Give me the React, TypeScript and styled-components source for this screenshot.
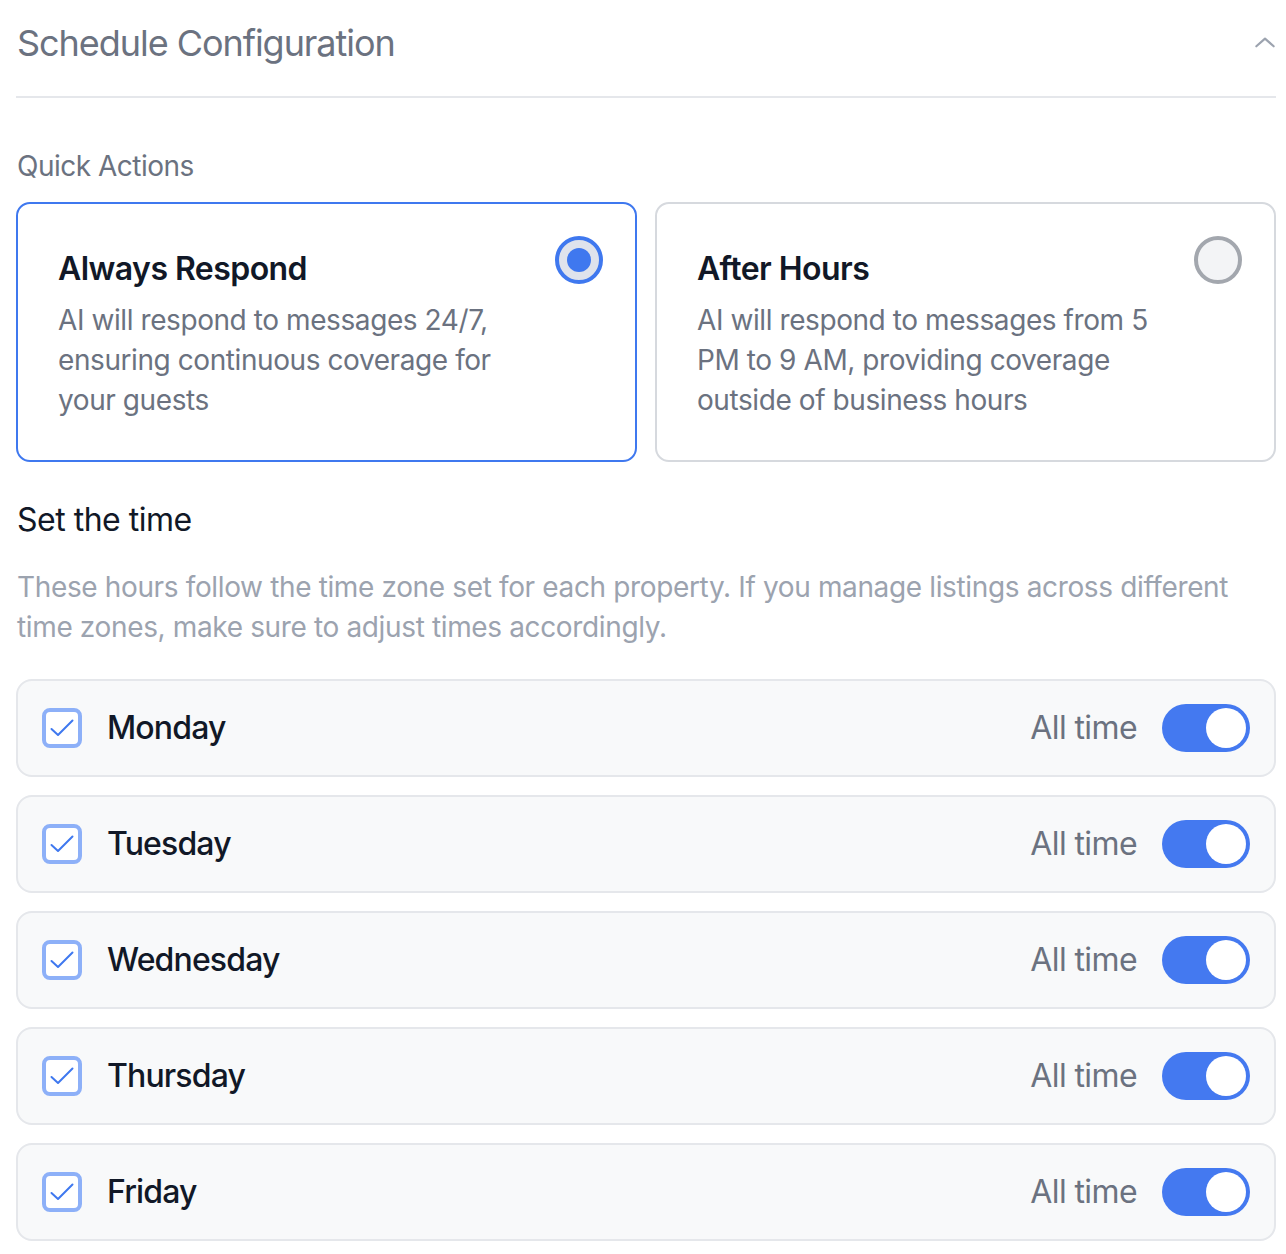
import React, { useState } from "react";
import styled, { createGlobalStyle } from "styled-components";

const Global = createGlobalStyle`
  html, body { margin: 0; padding: 0; background: #ffffff; }
  body { font-family: Inter, "Noto Sans", "Liberation Sans", sans-serif; -webkit-font-smoothing: antialiased; }
  * { box-sizing: border-box; }
`;

const Page = styled.div`
  padding: 0 10px 0 16px;
  width: 1286px;
`;

const Header = styled.div`
  height: 98px;
  padding-bottom: 10px;
  border-bottom: 2px solid #e5e7eb;
  display: flex;
  align-items: center;
  justify-content: space-between;
`;

const Title = styled.h1`
  margin: 0;
  font-size: 36px;
  line-height: 48px;
  font-weight: 400;
  letter-spacing: -1.05px;
  color: #6b7280;
  padding-left: 1px;
`;

const Chevron = styled.svg`
  width: 26px;
  height: 26px;
  margin-right: -2px;
  color: #9ca3af;
`;

const SectionLabel = styled.div`
  margin-top: 48px;
  font-size: 28px;
  line-height: 40px;
  letter-spacing: -0.5px;
  color: #6b7280;
  padding-left: 1px;
`;

const Cards = styled.div`
  margin-top: 16px;
  display: grid;
  grid-template-columns: 1fr 1fr;
  gap: 18px;
`;

const Card = styled.div<{ $active?: boolean }>`
  position: relative;
  border: 2px solid ${(p) => (p.$active ? "#3f78ef" : "#d6d9de")};
  border-radius: 14px;
  padding: 45px 40px 40px;
  background: #fff;
`;

const CardTitle = styled.div`
  font-size: 32px;
  line-height: 40px;
  font-weight: 600;
  letter-spacing: -0.55px;
  color: #111827;
  margin-bottom: 11px;
`;

const CardText = styled.div`
  font-size: 28px;
  line-height: 40px;
  letter-spacing: -0.42px;
  color: #6b7280;
  max-width: 480px;
`;

const Radio = styled.div<{ $checked?: boolean }>`
  position: absolute;
  top: 32px;
  right: 32px;
  width: 48px;
  height: 48px;
  border-radius: 50%;
  border: 4px solid ${(p) => (p.$checked ? "#3f78ef" : "#a3a7ae")};
  background: ${(p) => (p.$checked ? "#dfe3ec" : "#f3f4f6")};
  display: flex;
  align-items: center;
  justify-content: center;
`;

const RadioDot = styled.div`
  width: 24px;
  height: 24px;
  border-radius: 50%;
  background: #3f78ef;
`;

const SubHeading = styled.div`
  margin-top: 38px;
  font-size: 32px;
  line-height: 40px;
  letter-spacing: -0.5px;
  color: #111827;
  padding-left: 1px;
`;

const Help = styled.p`
  margin: 27px 0 0;
  font-size: 28px;
  line-height: 40px;
  letter-spacing: -0.36px;
  color: #9ca3af;
  padding-left: 1px;
`;

const Days = styled.div`
  margin-top: 32px;
  display: flex;
  flex-direction: column;
  gap: 18px;
`;

const DayRow = styled.div`
  height: 98px;
  border: 2px solid #e5e7eb;
  border-radius: 16px;
  background: #f8f9fa;
  display: flex;
  align-items: center;
  padding: 0 24px 0 24px;
`;

const CheckBox = styled.div`
  width: 40px;
  height: 40px;
  border: 4px solid #8db0f8;
  border-radius: 8px;
  background: #fff;
  display: flex;
  align-items: center;
  justify-content: center;
  flex-shrink: 0;
`;

const DayName = styled.div`
  margin-left: 25px;
  font-size: 32px;
  line-height: 40px;
  font-weight: 500;
  letter-spacing: -0.85px;
  color: #111827;
  flex: 1;
`;

const AllTime = styled.div`
  font-size: 32px;
  line-height: 40px;
  letter-spacing: -0.6px;
  color: #6b7280;
  margin-right: 25px;
`;

const Toggle = styled.div<{ $on?: boolean }>`
  width: 88px;
  height: 48px;
  border-radius: 24px;
  background: ${(p) => (p.$on ? "#4479f0" : "#d1d5db")};
  padding: 4px;
  display: flex;
  justify-content: ${(p) => (p.$on ? "flex-end" : "flex-start")};
`;

const Knob = styled.div`
  width: 40px;
  height: 40px;
  border-radius: 50%;
  background: #fff;
`;

const days = ["Monday", "Tuesday", "Wednesday", "Thursday", "Friday"];

export default function App() {
  const [mode, setMode] = useState<"always" | "after">("always");
  return (
    <Page>
      <Global />
      <Header>
        <Title>Schedule Configuration</Title>
        <Chevron viewBox="0 0 24 24" fill="none" stroke="currentColor" strokeWidth={2} strokeLinecap="round" strokeLinejoin="round">
          <path d="M4 15l8-7 8 7" />
        </Chevron>
      </Header>
      <SectionLabel>Quick Actions</SectionLabel>
      <Cards>
        <Card $active={mode === "always"} onClick={() => setMode("always")}>
          <CardTitle>Always Respond</CardTitle>
          <CardText>AI will respond to messages 24/7, ensuring continuous coverage for your guests</CardText>
          <Radio $checked={mode === "always"}>{mode === "always" && <RadioDot />}</Radio>
        </Card>
        <Card $active={mode === "after"} onClick={() => setMode("after")}>
          <CardTitle>After Hours</CardTitle>
          <CardText>AI will respond to messages from 5 PM to 9 AM, providing coverage outside of business hours</CardText>
          <Radio $checked={mode === "after"}>{mode === "after" && <RadioDot />}</Radio>
        </Card>
      </Cards>
      <SubHeading>Set the time</SubHeading>
      <Help>
        These hours follow the time zone set for each property. If you manage listings across different time zones, make sure to adjust times accordingly.
      </Help>
      <Days>
        {days.map((d) => (
          <DayRow key={d}>
            <CheckBox>
              <svg width="28" height="28" viewBox="0 0 28 28" fill="none" stroke="#3f78ef" strokeWidth={2} strokeLinecap="round" strokeLinejoin="round">
                <path d="M3.5 15l6.5 6L24.5 6.5" />
              </svg>
            </CheckBox>
            <DayName>{d}</DayName>
            <AllTime>All time</AllTime>
            <Toggle $on>
              <Knob />
            </Toggle>
          </DayRow>
        ))}
      </Days>
    </Page>
  );
}
